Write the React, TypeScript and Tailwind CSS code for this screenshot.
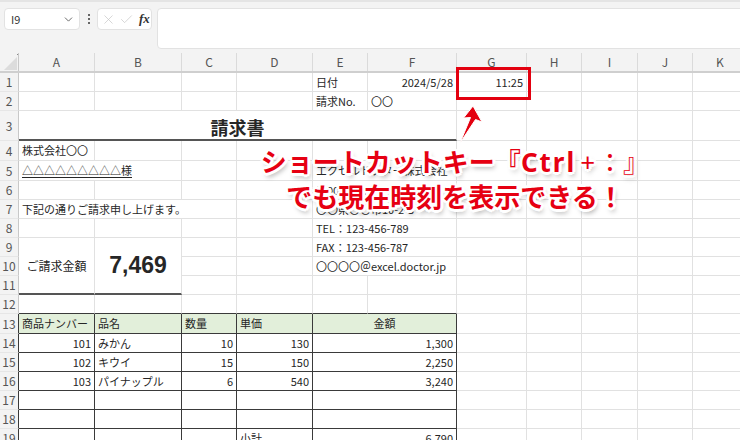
import React from 'react';
import { ChevronDown, X, Check } from 'lucide-react';

const GRID = 'grid grid-cols-[19px_76px_87px_55px_76px_55px_89px_70px_55px_56px_55px_55px_60px]';
const ROWS =
  'grid-rows-[19px_19px_30px_20px_20px_19px_19px_19px_19px_19px_19px_19px_20px_19px_19px_19px_19px_19px_19px]';

const GRAY = 'border-r border-b border-[#e1e1e1]';
const DARK = 'border-r border-b border-[#3a3a3a]';
const TOP_EDGE = 'border-r border-b border-r-[#e1e1e1] border-b-[#3a3a3a]';
const THICK = 'border-r border-b-2 border-r-[#e1e1e1] border-b-[#555]';

function Cell({
  children,
  className = '',
  b = GRAY,
}: {
  children?: React.ReactNode;
  className?: string;
  b?: string;
}) {
  return (
    <div className={`${b} flex items-center px-[3px] whitespace-nowrap text-[11px] text-[#262626] ${className}`}>
      {children}
    </div>
  );
}

function RowHead({ n, dark = false }: { n: number; dark?: boolean }) {
  return (
    <div
      className={`flex items-center justify-center bg-[#f3f3f3] border-r border-b border-b-[#e6e6e6] text-[12px] text-[#555] ${
        dark ? 'border-r-[#3a3a3a]' : 'border-r-[#c8c8c8]'
      }`}
    >
      {n}
    </div>
  );
}

const blanks = (n: number, b: string = GRAY) =>
  Array.from({ length: n }, (_, i) => <Cell key={'b' + i} b={b} />);

const items = [
  { no: 101, name: 'みかん', qty: 10, price: 130, sum: '1,300' },
  { no: 102, name: 'キウイ', qty: 15, price: 150, sum: '2,250' },
  { no: 103, name: 'パイナップル', qty: 6, price: 540, sum: '3,240' },
];

const letters = ['A', 'B', 'C', 'D', 'E', 'F', 'G', 'H', 'I', 'J', 'K', ''];

export default function App() {
  return (
    <div className="relative w-[740px] h-[440px] overflow-hidden bg-white font-['Noto_Sans_CJK_JP','Noto_Sans',sans-serif]">
      {/* formula bar */}
      <div className="h-[53px] bg-[#f3f3f3] border-t-2 border-[#e4e4e4] flex items-start pt-[6px] pl-[4px]">
        <div className="w-[76px] h-[22px] rounded-[4px] bg-white border border-[#e2e2e2] flex items-center justify-between pl-[6px] pr-[4px] text-[11px] text-[#333]">
          <span>I9</span>
          <ChevronDown size={13} strokeWidth={1.6} className="text-[#555]" />
        </div>
        <div className="w-[17px] h-[22px] flex flex-col items-center justify-center gap-[2px]">
          <span className="w-[2px] h-[2px] bg-[#666]" />
          <span className="w-[2px] h-[2px] bg-[#666]" />
          <span className="w-[2px] h-[2px] bg-[#666]" />
        </div>
        <div className="w-[55px] h-[22px] rounded-[4px] bg-white border border-[#e2e2e2] flex items-center gap-[3px] pl-[3px]">
          <X size={15} strokeWidth={1.1} className="text-[#c4c4c4]" />
          <Check size={15} strokeWidth={1.1} className="text-[#c4c4c4]" />
          <span className="ml-[2px] font-['Liberation_Serif',serif] italic font-bold text-[13px] text-[#333]">fx</span>
        </div>
        <div className="ml-[5px] flex-1 -mr-[10px] h-[41px] rounded-[4px] bg-white border border-[#e2e2e2]" />
      </div>

      {/* column headers */}
      <div className={`${GRID} h-[20px] bg-[#f3f3f3] border-b-2 border-[#cfcfcf]`}>
        <div className="relative border-r border-[#c8c8c8]">
          <svg className="absolute left-0 top-0" width="19" height="18" viewBox="0 0 19 18">
            <polygon points="4,17 17,17 17,4" fill="#dcdcdc" />
            <rect x="17" y="1" width="1" height="1" fill="#888" />
          </svg>
        </div>
        {letters.map((l, i) => (
          <div key={i} className="flex items-center justify-center border-r border-[#dadada] text-[12px] text-[#555]">
            {l}
          </div>
        ))}
      </div>

      {/* sheet */}
      <div className={`${GRID} ${ROWS}`}>
        {/* 1 */}
        <RowHead n={1} />
        {blanks(4)}
        <Cell>日付</Cell>
        <Cell className="justify-end">2024/5/28</Cell>
        <Cell className="justify-end">11:25</Cell>
        {blanks(5)}
        {/* 2 */}
        <RowHead n={2} />
        {blanks(4)}
        <Cell>請求No.</Cell>
        <Cell>〇〇</Cell>
        {blanks(6)}
        {/* 3 */}
        <RowHead n={3} />
        <Cell b="border-r border-b-2 border-r-[#e1e1e1] border-b-[#555]" className="col-span-6 justify-center items-end text-[18px] font-bold text-[#111] leading-[24px]">
          請求書
        </Cell>
        {blanks(6)}
        {/* 4 */}
        <RowHead n={4} />
        <Cell>株式会社〇〇</Cell>
        {blanks(11)}
        {/* 5 */}
        <RowHead n={5} />
        <Cell className="col-span-2">
          <span className="underline underline-offset-2">△△△△△△△△△様</span>
        </Cell>
        {blanks(2)}
        <Cell className="col-span-2">エクセルドクター株式会社</Cell>
        {blanks(6)}
        {/* 6 */}
        <RowHead n={6} />
        {blanks(4)}
        <Cell className="col-span-2">〒000-0000</Cell>
        {blanks(6)}
        {/* 7 */}
        <RowHead n={7} />
        <Cell className="col-span-3">下記の通りご請求申し上げます。</Cell>
        {blanks(1)}
        <Cell className="col-span-2">〇〇県〇〇市10-2-3</Cell>
        {blanks(6)}
        {/* 8 */}
        <RowHead n={8} />
        {blanks(4)}
        <Cell className="col-span-2">TEL：123-456-789</Cell>
        {blanks(6)}
        {/* 9 */}
        <RowHead n={9} />
        <Cell b={THICK} className="row-span-3 justify-center text-[12px]">
          ご請求金額
        </Cell>
        <Cell b={THICK} className="row-span-3 justify-center font-['Liberation_Sans',sans-serif] font-bold text-[23px] text-[#111]">
          7,469
        </Cell>
        {blanks(2)}
        <Cell className="col-span-2">FAX：123-456-787</Cell>
        {blanks(6)}
        {/* 10 */}
        <RowHead n={10} />
        {blanks(2)}
        <Cell className="col-span-2">〇〇〇〇＠excel.doctor.jp</Cell>
        {blanks(6)}
        {/* 11 */}
        <RowHead n={11} />
        {blanks(10)}
        {/* 12 */}
        <RowHead n={12} />
        {blanks(6, TOP_EDGE)}
        {blanks(6)}
        {/* 13 */}
        <RowHead n={13} dark />
        <Cell b={DARK} className="bg-[#e2efda]">商品ナンバー</Cell>
        <Cell b={DARK} className="bg-[#e2efda]">品名</Cell>
        <Cell b={DARK} className="bg-[#e2efda]">数量</Cell>
        <Cell b={DARK} className="bg-[#e2efda]">単価</Cell>
        <Cell b={DARK} className="col-span-2 justify-center bg-[#e2efda]">金額</Cell>
        {blanks(6)}
        {/* 14-16 */}
        {items.map((it, i) => (
          <React.Fragment key={it.no}>
            <RowHead n={14 + i} dark />
            <Cell b={DARK} className="justify-end">{it.no}</Cell>
            <Cell b={DARK}>{it.name}</Cell>
            <Cell b={DARK} className="justify-end">{it.qty}</Cell>
            <Cell b={DARK} className="justify-end">{it.price}</Cell>
            <Cell b={DARK} className="col-span-2 justify-end">{it.sum}</Cell>
            {blanks(6)}
          </React.Fragment>
        ))}
        {/* 17-18 */}
        {[17, 18].map((n) => (
          <React.Fragment key={n}>
            <RowHead n={n} dark />
            {blanks(4, DARK)}
            <Cell b={DARK} className="col-span-2" />
            {blanks(6)}
          </React.Fragment>
        ))}
        {/* 19 */}
        <RowHead n={19} dark />
        {blanks(3, DARK)}
        <Cell b={DARK}>小計</Cell>
        <Cell b={DARK} className="col-span-2 justify-end">6,790</Cell>
        {blanks(6)}
      </div>

      {/* red highlight box */}
      <div className="absolute left-[456px] top-[67px] w-[75px] h-[33px] border-[3px] border-[#e3000f]" />

      {/* arrow */}
      <svg className="absolute left-[450px] top-[100px]" width="40" height="48" viewBox="0 0 40 48">
        <polygon
          points="23,6 32,22 25.5,19.5 10,43 20.5,17.5 13.5,18"
          fill="#e3000f"
          stroke="#fff"
          strokeWidth="1"
          strokeLinejoin="round"
        />
      </svg>

      {/* callout text */}
      <div className="absolute left-[255px] top-[144px] w-[400px] text-center font-bold text-[26px] leading-[33px] text-[#e60012] whitespace-nowrap [text-shadow:2px_2px_0_#fff,-2px_2px_0_#fff,2px_-2px_0_#fff,-2px_-2px_0_#fff,0_3px_0_#fff,0_-3px_0_#fff,3px_0_0_#fff,-3px_0_0_#fff,2px_4px_5px_rgba(0,0,0,0.35)]">
        <div>
          ショートカットキー『<span className="font-['Noto_Sans',sans-serif] font-bold tracking-[2px]">Ctrl</span>
          <span className="font-['Noto_Sans',sans-serif] font-normal ml-[4px] mr-[2px]">+</span>
          <span className="font-normal">：』</span>
        </div>
        <div>でも現在時刻を表示できる！</div>
      </div>
    </div>
  );
}
